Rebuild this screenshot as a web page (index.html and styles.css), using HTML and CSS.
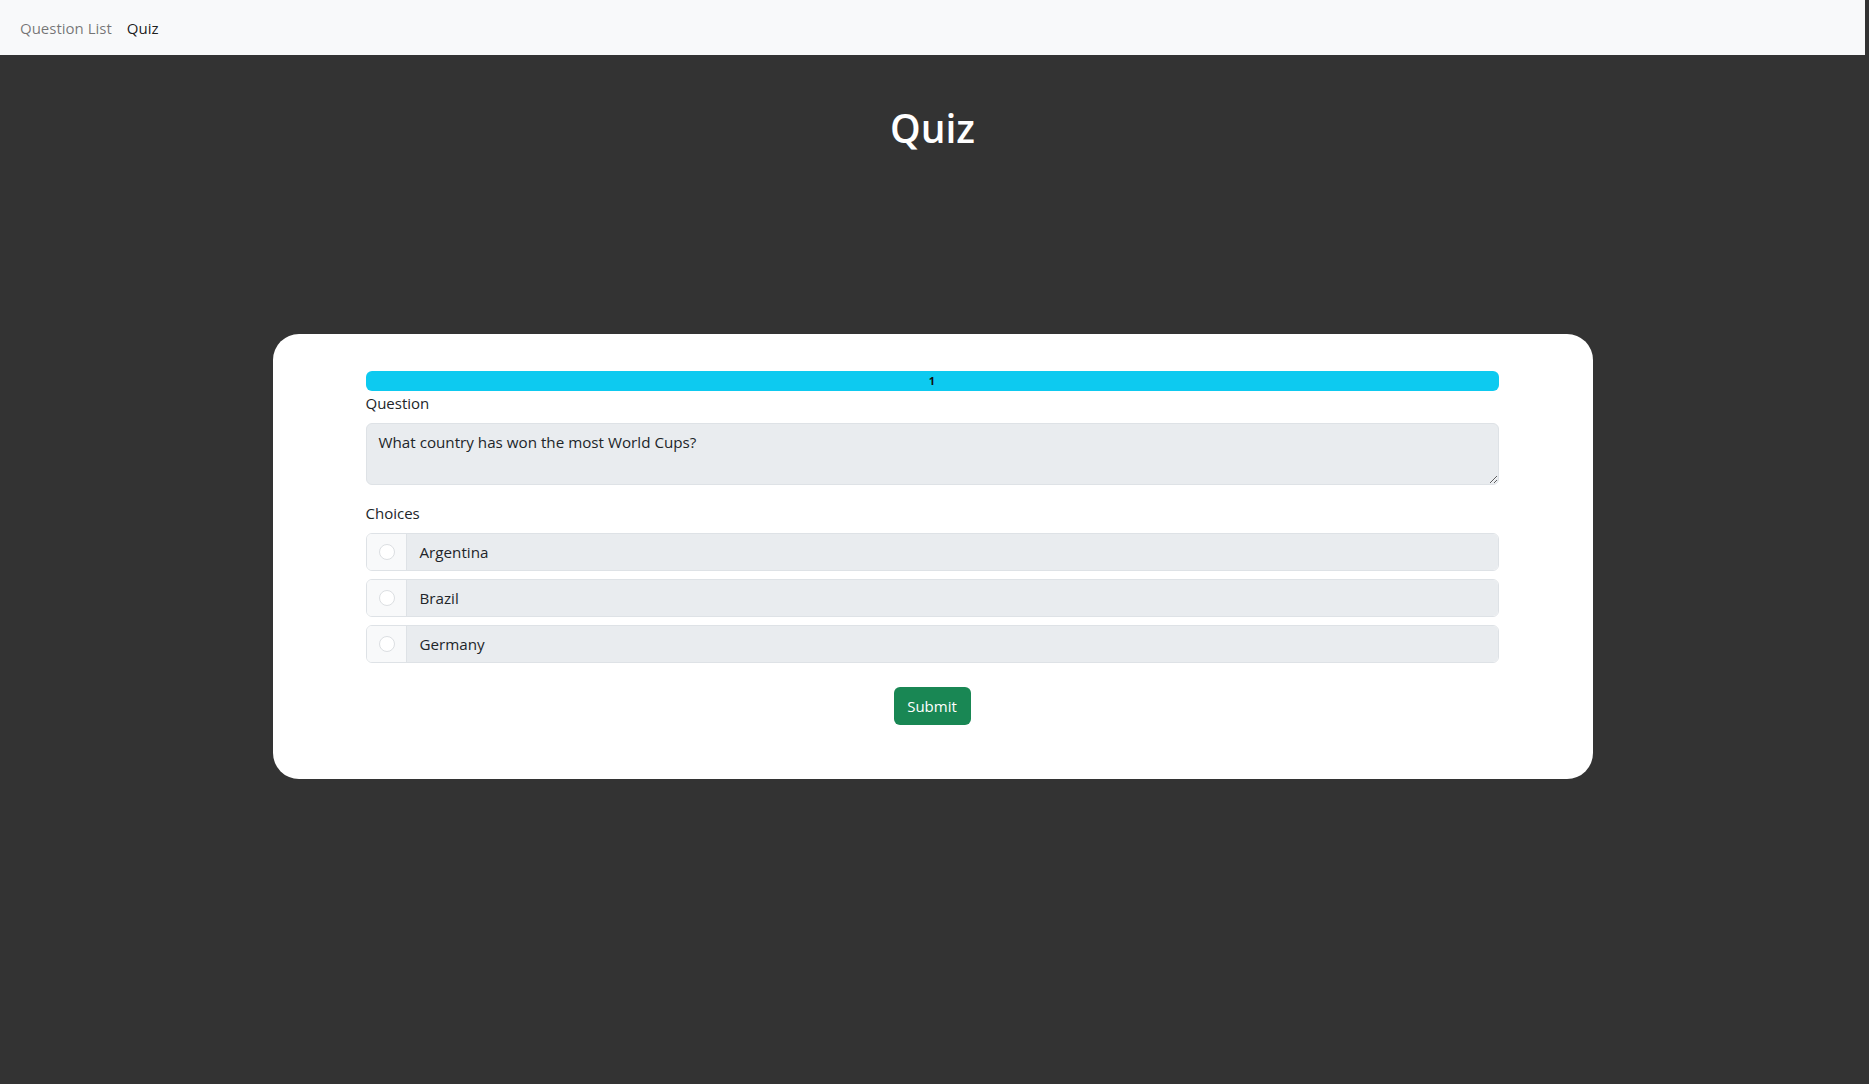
FILE: index.html
```html
<!DOCTYPE html>
<html lang="en">
<head>
<meta charset="utf-8">
<title>Quiz</title>
<link rel="stylesheet" href="styles.css">
</head>
<body>
<nav class="navbar">
  <a class="nav-link" href="#">Question List</a>
  <a class="nav-link active" href="#">Quiz</a>
</nav>
<main class="page">
  <h1 class="title">Quiz</h1>
  <section class="card">
    <div class="progress"><div class="progress-bar">1</div></div>
    <label class="label">Question</label>
    <textarea class="question" readonly>What country has won the most World Cups?</textarea>
    <label class="label choices-label">Choices</label>
    <div class="choice">
      <span class="choice-radio"><span class="radio"></span></span>
      <span class="choice-text">Argentina</span>
    </div>
    <div class="choice">
      <span class="choice-radio"><span class="radio"></span></span>
      <span class="choice-text">Brazil</span>
    </div>
    <div class="choice">
      <span class="choice-radio"><span class="radio"></span></span>
      <span class="choice-text">Germany</span>
    </div>
    <div class="actions"><button class="btn-submit">Submit</button></div>
  </section>
</main>
</body>
</html>
```
FILE: styles.css
```css
* { box-sizing: border-box; }
html, body { margin: 0; padding: 0; }
body {
  background: #333333;
  font-family: "Open Sans", "Noto Sans", sans-serif;
  font-size: 16px;
  line-height: 24px;
  color: #212529;
  min-height: 1084px;
}
.navbar {
  height: 55px;
  background: #f8f9fa;
  margin-right: 4px;
  display: flex;
  align-items: center;
  gap: 15px;
  padding-left: 20px;
}
.nav-link {
  text-decoration: none;
  color: rgba(0,0,0,0.55);
  font-size: 15px;
}
.nav-link.active { color: rgba(0,0,0,0.9); }
.page {
  display: flex;
  flex-direction: column;
  align-items: center;
  margin-right: 4px;
}
.title {
  margin: 49px 0 0;
  font-size: 39px;
  line-height: 48px;
  font-weight: 600;
  color: #ffffff;
}
.card {
  margin-top: 182px;
  width: 1320px;
  background: #ffffff;
  border-radius: 26px;
  padding: 37px 94px 54px 93px;
  display: flex;
  flex-direction: column;
}
.progress {
  height: 20px;
  border-radius: 6px;
  background: #e9ecef;
  overflow: hidden;
  display: flex;
}
.progress-bar {
  width: 100%;
  background: #0dcaf0;
  color: #111;
  font-size: 11px;
  font-weight: 700;
  line-height: 20px;
  text-align: center;
}
.label { display: block; margin-bottom: 8px; font-size: 15px; }
.question {
  display: block;
  width: 100%;
  height: 62px;
  padding: 6px 12px;
  border: 1px solid #dee2e6;
  border-radius: 6px;
  background: #e9ecef;
  font-family: inherit;
  font-size: 15.2px;
  line-height: 24px;
  color: #212529;
  resize: vertical;
  outline: none;
}
.choices-label { margin-top: 16px; }
.choice {
  display: flex;
  height: 38px;
  margin-bottom: 8px;
  border: 1px solid #dee2e6;
  border-radius: 6px;
  overflow: hidden;
}
.choice-radio {
  width: 40px;
  background: #f8f9fa;
  border-right: 1px solid #dee2e6;
  display: flex;
  align-items: center;
  justify-content: center;
  padding-left: 1px;
}
.radio {
  width: 16px;
  height: 16px;
  border-radius: 50%;
  border: 1px solid #dcdfe2;
  background: #ffffff;
}
.choice-text {
  flex: 1;
  background: #e9ecef;
  padding-left: 13px;
  display: flex;
  align-items: center;
  font-size: 15.2px;
}
.actions { display: flex; justify-content: center; margin-top: 16px; }
.btn-submit {
  width: 77px;
  height: 38px;
  border: none;
  border-radius: 6px;
  background: #198754;
  color: #ffffff;
  font-family: inherit;
  font-size: 15px;
}
```
